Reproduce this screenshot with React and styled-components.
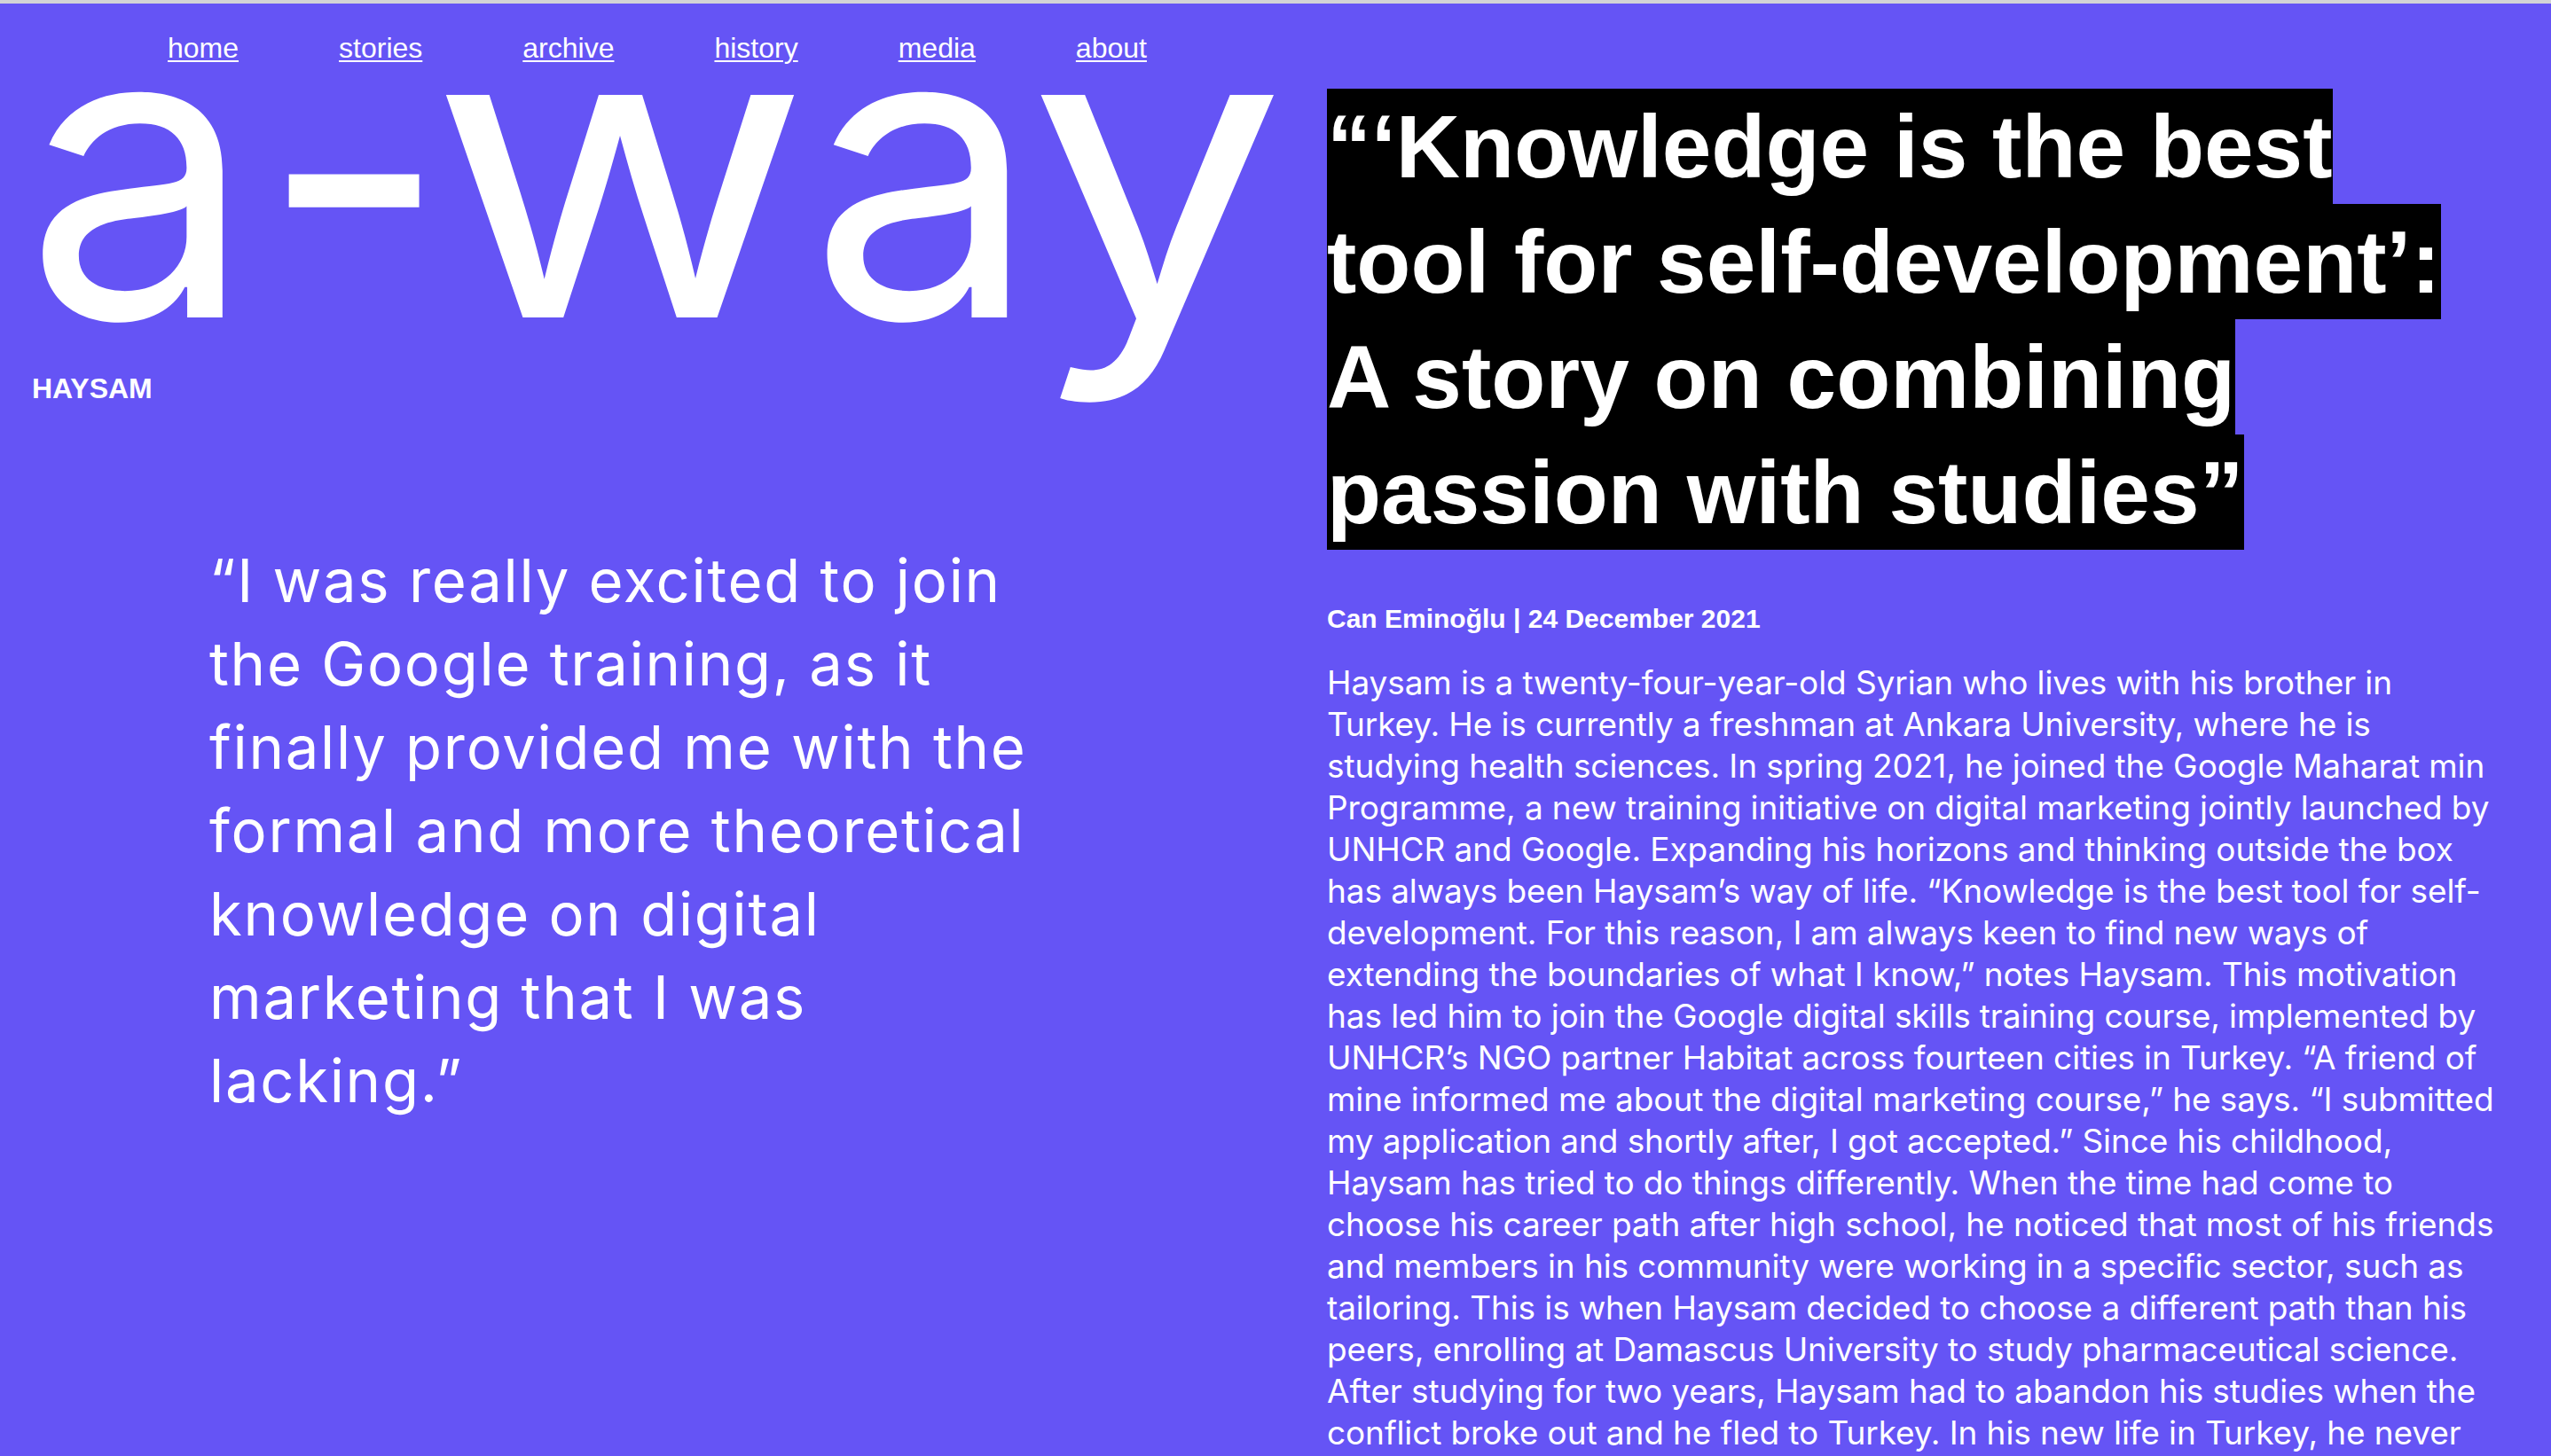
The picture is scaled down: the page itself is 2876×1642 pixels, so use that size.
import React from "react";
import styled, { createGlobalStyle } from "styled-components";

const GlobalStyle = createGlobalStyle`
  html, body { margin: 0; padding: 0; }
  body { background: #6554f5; }
`;

const Page = styled.div`
  display: grid;
  grid-template-columns: 1438px 1438px;
  min-height: 100vh;
  border-top: 4px solid #d3d3d6;
  background: #6554f5;
  color: #ffffff;
  overflow: hidden;
`;

const LeftCol = styled.section`
  display: flex;
  flex-direction: column;
  align-items: flex-start;
`;

const RightCol = styled.article`
  display: flex;
  flex-direction: column;
  align-items: flex-start;
  padding: 96px 58px 0 58px;
`;

const Nav = styled.nav`
  display: flex;
  gap: 113px;
  padding: 32px 0 1px 189px;
`;

const NavLink = styled.a`
  font-family: "Liberation Sans", Arial, Helvetica, sans-serif;
  font-size: 32px;
  line-height: 37px;
  color: #ffffff;
  text-decoration: underline;
  text-decoration-thickness: 2px;
  text-underline-offset: 3px;
`;

const Title = styled.h1`
  margin: 0;
  padding-left: 28px;
  font-family: Inter, "Noto Sans", sans-serif;
  font-weight: 400;
  font-size: 460px;
  line-height: 233px;
  white-space: nowrap;
`;

const Glyph = styled.span`
  display: inline-block;
  margin-left: ${(p) => p.$ml || 0}px;
  margin-right: ${(p) => p.$mr || 0}px;
  transform: scaleX(${(p) => p.$scale || 1});
  transform-origin: left center;
`;

const Name = styled.h2`
  margin: 113px 0 0 36px;
  font-family: "Liberation Sans", Arial, Helvetica, sans-serif;
  font-weight: 700;
  font-size: 32px;
  line-height: 37px;
`;

const Quote = styled.blockquote`
  margin: 151px 0 0 236px;
  font-family: Inter, "Noto Sans", sans-serif;
  font-weight: 400;
  font-size: 67px;
  line-height: 94px;
  letter-spacing: 1.7px;
  white-space: nowrap;
`;

const Headline = styled.h1`
  margin: 0;
  font-family: "Liberation Sans", Arial, Helvetica, sans-serif;
  font-weight: 700;
  font-size: 100px;
  line-height: 130px;
`;

const Highlight = styled.span`
  background: #000000;
  padding: 9px 0;
`;

const Byline = styled.p`
  margin: 61px 0 0 0;
  font-family: "Liberation Sans", Arial, Helvetica, sans-serif;
  font-weight: 700;
  font-size: 30px;
  line-height: 34px;
`;

const Body = styled.p`
  margin: 31px 0 0 0;
  font-family: Inter, "Noto Sans", sans-serif;
  font-weight: 400;
  font-size: 37px;
  line-height: 47px;
  letter-spacing: -0.1px;
  white-space: nowrap;
`;

const navItems = ["home", "stories", "archive", "history", "media", "about"];

const quoteLines = [
  "“I was really excited to join",
  "the Google training, as it",
  "finally provided me with the",
  "formal and more theoretical",
  "knowledge on digital",
  "marketing that I was",
  "lacking.”",
];

const bodyLines = [
  "Haysam is a twenty-four-year-old Syrian who lives with his brother in",
  "Turkey. He is currently a freshman at Ankara University, where he is",
  "studying health sciences. In spring 2021, he joined the Google Maharat min",
  "Programme, a new training initiative on digital marketing jointly launched by",
  "UNHCR and Google. Expanding his horizons and thinking outside the box",
  "has always been Haysam’s way of life. “Knowledge is the best tool for self-",
  "development. For this reason, I am always keen to find new ways of",
  "extending the boundaries of what I know,” notes Haysam. This motivation",
  "has led him to join the Google digital skills training course, implemented by",
  "UNHCR’s NGO partner Habitat across fourteen cities in Turkey. “A friend of",
  "mine informed me about the digital marketing course,” he says. “I submitted",
  "my application and shortly after, I got accepted.” Since his childhood,",
  "Haysam has tried to do things differently. When the time had come to",
  "choose his career path after high school, he noticed that most of his friends",
  "and members in his community were working in a specific sector, such as",
  "tailoring. This is when Haysam decided to choose a different path than his",
  "peers, enrolling at Damascus University to study pharmaceutical science.",
  "After studying for two years, Haysam had to abandon his studies when the",
  "conflict broke out and he fled to Turkey. In his new life in Turkey, he never",
];

const withBreaks = (lines) =>
  lines.map((l, i) => (
    <React.Fragment key={i}>
      {l}
      {i < lines.length - 1 && <br />}
    </React.Fragment>
  ));

export default function App() {
  return (
    <>
      <GlobalStyle />
      <Page>
        <LeftCol>
          <Nav>
            {navItems.map((n) => (
              <NavLink key={n} href="#">
                {n}
              </NavLink>
            ))}
          </Nav>
          <Title>
            a<Glyph $ml={7} $mr={-20}>-</Glyph>
            <Glyph $scale={1.137} $mr={51}>w</Glyph>a
            <Glyph $ml={-11} $scale={1.12}>y</Glyph>
          </Title>
          <Name>HAYSAM</Name>
          <Quote>{withBreaks(quoteLines)}</Quote>
        </LeftCol>
        <RightCol>
          <Headline>
            <Highlight>
              “‘Knowledge is the best tool for self-development’: A story on
              combining passion with studies”
            </Highlight>
          </Headline>
          <Byline>Can Eminoğlu | 24 December 2021</Byline>
          <Body>{withBreaks(bodyLines)}</Body>
        </RightCol>
      </Page>
    </>
  );
}
